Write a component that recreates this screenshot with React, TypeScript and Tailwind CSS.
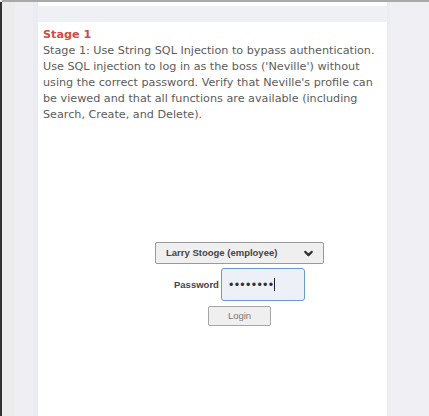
import { ChevronDown } from "lucide-react";

export default function App() {
  return (
    <div className="h-[416px] w-[429px] overflow-hidden bg-[#f0f0f4] flex flex-col">
      <div className="h-[2px] bg-[#a9a9a9] ml-[2px]" />
      <div className="flex flex-1">
        <div className="w-[2px] bg-[#333]" />
        <div className="w-[13px] bg-[#ececec]" />
        <div className="w-[18px] bg-[#efeff3]" />
        <div className="w-[5px] bg-[#ebebf4]" />
        <div className="w-[349px] flex flex-col">
          <div className="h-[4px] bg-white" />
          <div className="h-[16px] bg-[#efeff6]" />
          <div className="flex-1 bg-white px-[5px] pt-[5px] font-['DejaVu_Sans',sans-serif] text-[11.2px] leading-[16px] text-[#5c5c5c]">
            <div className="font-bold text-[#d14b3f]">Stage 1</div>
            <p>
              Stage 1: Use String SQL Injection to bypass authentication. Use SQL injection to log in as the boss
              ('Neville') without using the correct password. Verify that Neville's profile can be viewed and that all
              functions are available (including Search, Create, and Delete).
            </p>
            <div className="mt-[119px] ml-[112px] flex flex-col font-['Liberation_Sans',Arial,sans-serif] text-[9.5px]">
              <div className="w-[169px] h-[22px] border border-[#9a9a9a] rounded-[2px] bg-[#efefef] flex items-center justify-between pl-[10px] pr-[8px] font-bold text-[#444]">
                <span>Larry Stooge (employee)</span>
                <ChevronDown size={13} strokeWidth={4} className="text-[#333]" />
              </div>
              <div className="mt-[4px] flex items-center">
                <span className="ml-[19px] w-[47px] font-bold text-[#444]">Password</span>
                <div className="w-[84px] h-[33px] border-[1.5px] border-[#6b9bc8] rounded-[3px] bg-[#eef0f8] flex items-center pl-[7px] text-[#333] text-[12.5px] tracking-[1.3px]">
                  <span>••••••••</span>
                  <span className="w-[1px] h-[13px] bg-[#222]" />
                </div>
              </div>
              <div className="mt-[5px] ml-[53px] w-[63px] h-[20px] border border-[#a5a5a5] rounded-[2px] bg-[#efefef] flex items-center justify-center text-[#777]">
                Login
              </div>
            </div>
          </div>
        </div>
        <div className="w-[3px] bg-[#ececf5]" />
        <div className="flex-1" />
      </div>
    </div>
  );
}
